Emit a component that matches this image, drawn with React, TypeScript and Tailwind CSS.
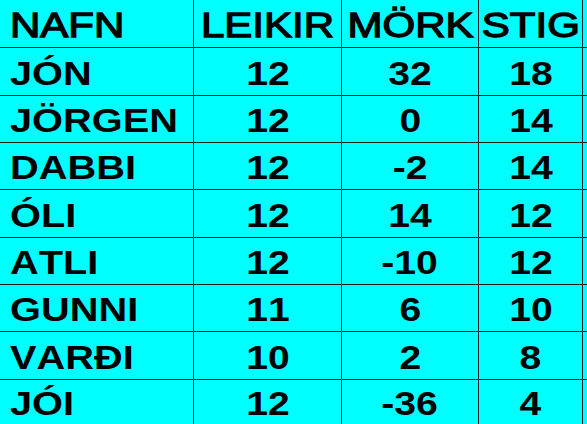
import React from "react";

const rows = [
  { name: "JÓN", games: 12, goals: 32, points: 18, h: "h-[48px]" },
  { name: "JÖRGEN", games: 12, goals: 0, points: 14, h: "h-[47px]" },
  { name: "DABBI", games: 12, goals: -2, points: 14, h: "h-[47px]" },
  { name: "ÓLI", games: 12, goals: 14, points: 12, h: "h-[48px]" },
  { name: "ATLI", games: 12, goals: -10, points: 12, h: "h-[47px]" },
  { name: "GUNNI", games: 11, goals: 6, points: 10, h: "h-[47px]" },
  { name: "VARÐI", games: 10, goals: 2, points: 8, h: "h-[48px]" },
  { name: "JÓI", games: 12, goals: -36, points: 4, h: "h-[45px]" },
];

const cols = "grid grid-cols-[194px_148px_137px_104px]";
const cell = "flex items-center border-r border-[#0d1f33] pt-[2px]";

const App = () => {
  return (
    <div
      className="w-[587px] h-[424px] overflow-hidden bg-[#00ffff] text-black [font-kerning:none]"
      style={{ fontFamily: '"Liberation Sans", Arial, sans-serif' }}
    >
      <div
        className={`${cols} h-[47px] text-[35px] leading-none [-webkit-text-stroke:1.3px_black]`}
      >
        <div className={`${cell} pl-[10px]`}>
          <span className="inline-block scale-x-[1.2] origin-left">NAFN</span>
        </div>
        <div className={`${cell} justify-center`}>
          <span className="inline-block scale-x-[1.2]">LEIKIR</span>
        </div>
        <div className={`${cell} justify-center`}>
          <span className="inline-block scale-x-[1.2]">MÖRK</span>
        </div>
        <div className={`${cell} justify-center`}>
          <span className="inline-block scale-x-[1.2]">STIG</span>
        </div>
      </div>

      {rows.map((row) => (
        <div
          key={row.name}
          className={`${cols} ${row.h} border-t border-[#0d1f33] text-[34px] font-bold leading-none`}
        >
          <div className={`${cell} pl-[10px]`}>
            <span className="inline-block scale-x-[1.17] origin-left">{row.name}</span>
          </div>
          <div className={`${cell} justify-center`}>
            <span className="inline-block scale-x-[1.15]">{row.games}</span>
          </div>
          <div className={`${cell} justify-center`}>
            <span className="inline-block scale-x-[1.15]">{row.goals}</span>
          </div>
          <div className={`${cell} justify-center`}>
            <span className="inline-block scale-x-[1.15]">{row.points}</span>
          </div>
        </div>
      ))}
    </div>
  );
};

export default App;
